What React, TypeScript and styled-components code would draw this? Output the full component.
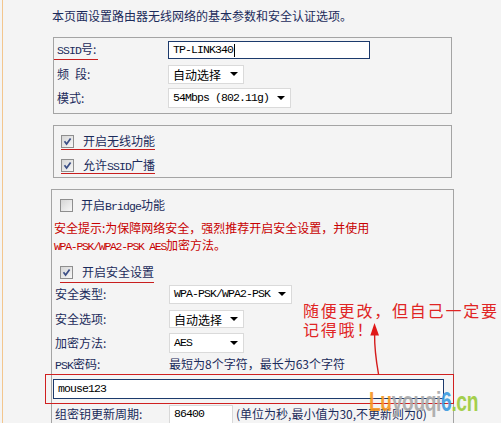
import React from 'react';
import styled, { createGlobalStyle } from 'styled-components';

const GlobalStyle = createGlobalStyle`
  html, body { margin: 0; padding: 0; background: #f4f4f4; overflow: hidden; }
  body {
    font-family: "Noto Sans CJK SC", "Noto Sans", sans-serif;
    font-size: 12px;
    color: #1b2b5b;
  }
`;

const Root = styled.div`
  position: relative;
  width: 501px;
  height: 423px;
  overflow: hidden;
`;

const Page = styled.div`
  margin-left: 2px;
  border-left: 1px solid #f3c68e;
  min-height: 423px;
  padding-left: 48px;
  box-sizing: border-box;
`;

const Intro = styled.div`
  padding-top: 7px;
  margin-left: 1px;
  line-height: 18px;
  height: 18px;
  margin-bottom: 12px;
  white-space: nowrap;
`;

const Box = styled.div<{ $left: number; $width: number; $top?: number; $pt?: number; $pb?: number; $pl?: number }>`
  margin-left: ${p => p.$left}px;
  margin-top: ${p => p.$top ?? 0}px;
  width: ${p => p.$width}px;
  box-sizing: border-box;
  border: 1px solid #a4a4a4;
  padding: ${p => p.$pt ?? 0}px 0 ${p => p.$pb ?? 0}px ${p => p.$pl ?? 0}px;
  display: flex;
  flex-direction: column;
`;

const Row = styled.div<{ $label: number; $h: number; $pl?: number }>`
  display: grid;
  grid-template-columns: ${p => p.$label}px auto;
  align-items: center;
  height: ${p => p.$h}px;
  padding-left: ${p => p.$pl ?? 0}px;
  white-space: nowrap;
`;

const Label = styled.span`
  line-height: 16px;
`;

const Mark = styled.span<{ $pb: number; $gap: number }>`
  display: inline-flex;
  align-items: center;
  gap: ${p => p.$gap}px;
  height: 16px;
  line-height: 16px;
  padding-bottom: ${p => p.$pb}px;
  border-bottom: 1px solid #c81e1e;
  white-space: nowrap;
`;

const LabelMark = styled.span`
  display: inline-block;
  line-height: 16px;
  height: 16px;
  padding: 0 2px 2px 3px;
  margin-left: -3px;
  border-bottom: 1px solid #c81e1e;
`;

const CheckLine = styled.div<{ $mt: number; $pl: number; $h?: number }>`
  display: flex;
  align-items: center;
  margin-top: ${p => p.$mt}px;
  padding-left: ${p => p.$pl}px;
  ${p => (p.$h ? `height: ${p.$h}px;` : '')}
  white-space: nowrap;
`;

const Plain = styled.span<{ $gap: number }>`
  display: inline-flex;
  align-items: center;
  gap: ${p => p.$gap}px;
  line-height: 16px;
`;

const Notice = styled.div`
  margin-top: 3px;
  padding-left: 2px;
  line-height: 17px;
  height: 34px;
  color: #c80000;
  white-space: nowrap;
`;

const Lat = styled.span<{ $ls?: number }>`
  font-family: "Liberation Mono", "DejaVu Sans Mono", monospace;
  font-size: 11.5px;
  line-height: 1;
  letter-spacing: ${p => p.$ls ?? -0.9}px;
`;

const Field = styled.div<{ $w: number; $h: number; $light?: boolean }>`
  width: ${p => p.$w}px;
  height: ${p => p.$h}px;
  box-sizing: border-box;
  background: #fff;
  border: 1px solid ${p => (p.$light ? '#d8d8d8' : '#1c3a6c')};
  display: flex;
  align-items: center;
  padding-left: 4px;
  color: #000;
`;

const Cursor = styled.span`
  display: inline-block;
  width: 1px;
  height: 13px;
  background: #000;
  margin-left: 1px;
`;

const Select = styled.div<{ $w: number; $h: number }>`
  width: ${p => p.$w}px;
  height: ${p => p.$h}px;
  box-sizing: border-box;
  background: #fff;
  border: 1px solid #dadada;
  display: flex;
  align-items: center;
  justify-content: space-between;
  padding: 0 5px 0 4px;
  color: #000;
`;

const Caret = styled.span`
  width: 0;
  height: 0;
  border-left: 4px solid transparent;
  border-right: 4px solid transparent;
  border-top: 4px solid #000;
`;

const RedFrame = styled.div`
  margin-left: -7px;
  width: 409px;
  height: 30px;
  box-sizing: border-box;
  border: 1px solid #d02020;
  padding: 4px 0 0 7px;
`;

const Hint = styled.span`
  color: #1b2b5b;
`;

const Annotation = styled.div`
  position: absolute;
  left: 303px;
  top: 301px;
  font-size: 16px;
  line-height: 19px;
  letter-spacing: 1.8px;
  color: #e02424;
  white-space: nowrap;
`;

const ArrowSvg = styled.svg`
  position: absolute;
  left: 366px;
  top: 318px;
`;

const Watermark = styled.div`
  position: absolute;
  left: 369px;
  top: 389px;
  font-family: "Liberation Sans", Arial, sans-serif;
  font-weight: bold;
  font-size: 27px;
  line-height: 27px;
  white-space: nowrap;
  transform: scaleX(0.71);
  transform-origin: left top;
  opacity: 0.9;
  letter-spacing: -0.5px;
`;

const WmPart = styled.span<{ $c: string }>`
  color: ${p => p.$c};
`;

const CheckBox: React.FC<{ checked?: boolean }> = ({ checked }) => (
  <svg width="13" height="13" viewBox="0 0 13 13" style={{ display: 'block' }}>
    <defs>
      <linearGradient id="cbg" x1="0" y1="0" x2="1" y2="1">
        <stop offset="0" stopColor="#d4d4d4" />
        <stop offset="1" stopColor="#f9f9f9" />
      </linearGradient>
    </defs>
    <rect x="0.5" y="0.5" width="12" height="12" fill="url(#cbg)" stroke="#8e8e8e" />
    {checked && (
      <path d="M3.5 6.2 L5.6 9 L9.6 3.4" fill="none" stroke="#3c4f86" strokeWidth="1.7" />
    )}
  </svg>
);

export default function App() {
  return (
    <Root>
      <GlobalStyle />
      <Page>
        <Intro>本页面设置路由器无线网络的基本参数和安全认证选项。</Intro>

        <Box $left={2} $width={399} $pl={3} $pb={3}>
          <Row $label={111} $h={24}>
            <Label>
              <LabelMark>
                <Lat>SSID</Lat>号:
              </LabelMark>
            </Label>
            <Field $w={202} $h={18}>
              <Lat>TP-LINK340</Lat>
              <Cursor />
            </Field>
          </Row>
          <Row $label={111} $h={24}>
            <Label>频{'\u2002'}段:</Label>
            <Select $w={76} $h={19}>
              <span>自动选择</span>
              <Caret />
            </Select>
          </Row>
          <Row $label={111} $h={24}>
            <Label>模式:</Label>
            <Select $w={123} $h={20}>
              <Lat>54Mbps (802.11g)</Lat>
              <Caret />
            </Select>
          </Row>
        </Box>

        <Box $left={2} $width={399} $top={11} $pt={7} $pb={3} $pl={7}>
          <CheckLine $mt={0} $pl={0}>
            <Mark $pb={0} $gap={9}>
              <CheckBox checked />
              <span>开启无线功能</span>
            </Mark>
          </CheckLine>
          <CheckLine $mt={7} $pl={0}>
            <Mark $pb={0} $gap={9}>
              <CheckBox checked />
              <span>
                允许<Lat>SSID</Lat>广播
              </span>
            </Mark>
          </CheckLine>
        </Box>

        <Box $left={0} $width={403} $top={11} $pt={4} $pb={10}>
          <CheckLine $mt={0} $pl={8} $h={22}>
            <Plain $gap={8}>
              <CheckBox />
              <span>
                开启<Lat>Bridge</Lat>功能
              </span>
            </Plain>
          </CheckLine>
          <Notice>
            <div>安全提示:为保障网络安全，强烈推荐开启安全设置，并使用</div>
            <div>
              <Lat $ls={-1.3}>WPA-PSK/WPA2-PSK AES</Lat>加密方法。
            </div>
          </Notice>
          <CheckLine $mt={11} $pl={8}>
            <Mark $pb={2} $gap={9}>
              <CheckBox checked />
              <span>开启安全设置</span>
            </Mark>
          </CheckLine>
          <Row $label={114} $h={22} $pl={3}>
            <Label>安全类型:</Label>
            <Select $w={123} $h={19}>
              <Lat>WPA-PSK/WPA2-PSK</Lat>
              <Caret />
            </Select>
          </Row>
          <Row $label={114} $h={28} $pl={3}>
            <Label>安全选项:</Label>
            <Select $w={75} $h={18}>
              <span>自动选择</span>
              <Caret />
            </Select>
          </Row>
          <Row $label={114} $h={20} $pl={3}>
            <Label>加密方法:</Label>
            <Select $w={75} $h={20}>
              <Lat>AES</Lat>
              <Caret />
            </Select>
          </Row>
          <Row $label={114} $h={21} $pl={3}>
            <Label>
              <Lat>PSK</Lat>密码:
            </Label>
            <Hint>最短为8个字符，最长为63个字符</Hint>
          </Row>
          <RedFrame>
            <Field $w={391} $h={20}>
              <Lat>mouse123</Lat>
            </Field>
          </RedFrame>
          <Row $label={114} $h={20} $pl={3}>
            <Label>组密钥更新周期:</Label>
            <Plain $gap={3}>
              <Field $w={64} $h={19} $light>
                <Lat>86400</Lat>
              </Field>
              <span>(单位为秒,最小值为30,不更新则为0)</span>
            </Plain>
          </Row>
        </Box>
      </Page>

      <Annotation>
        <div>随便更改，但自己一定要</div>
        <div>记得哦！</div>
      </Annotation>
      <ArrowSvg width="20" height="60" viewBox="0 0 20 60">
        <path d="M8.5 5 L4.3 17.5 L13 17.5 Z" fill="#e01818" />
        <path d="M8.6 16 Q 8.4 33 12.5 56" fill="none" stroke="#d41c1c" strokeWidth="1.4" />
      </ArrowSvg>
      <Watermark>
        <WmPart $c="#f7951e">Lu</WmPart>
        <WmPart $c="#a9a9a9">youqi</WmPart>
        <WmPart $c="#3b9be0">6</WmPart>
        <WmPart $c="#9ccc3a">.cn</WmPart>
      </Watermark>
    </Root>
  );
}
